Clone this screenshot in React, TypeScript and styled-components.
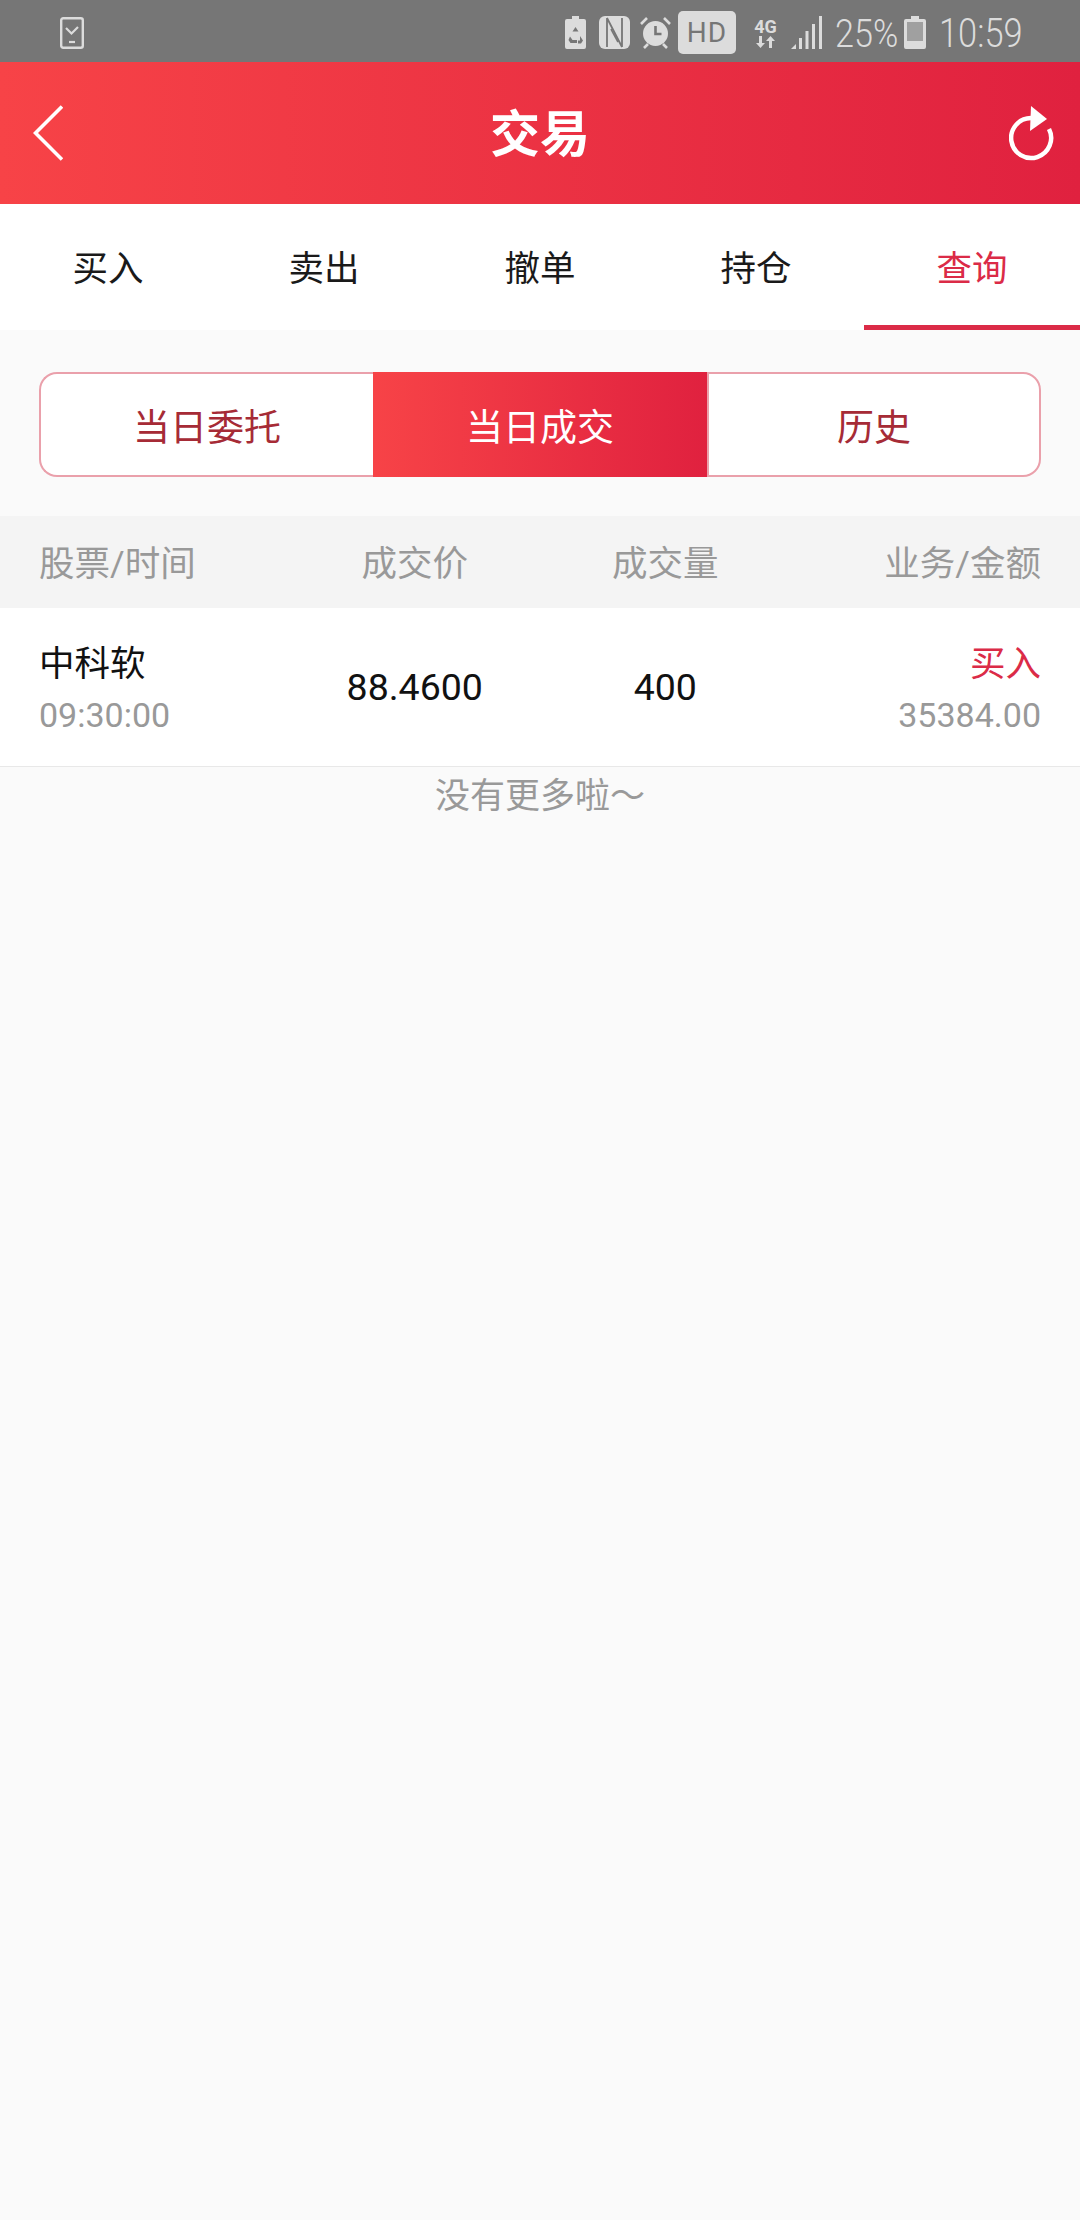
import { createGlobalStyle, styled } from 'styled-components';

const CJK = `Roboto, "Noto Sans CJK SC", sans-serif`;

const GlobalStyle = createGlobalStyle`
	html,
	body {
		margin: 0;
		padding: 0;
		background: #fafafa;
	}
	* {
		box-sizing: border-box;
	}
`;

const Page = styled.div`
	width: 1080px;
	min-height: 2220px;
	background: #fafafa;
	font-family: ${CJK};
	overflow: hidden;
`;

const StatusBar = styled.div`
	height: 62px;
	padding: 3px 0 0 60px;
	display: flex;
	align-items: center;
	background: #767676;
	color: #dcdcdc;
`;

const StatusRight = styled.div`
	margin-left: auto;
	display: flex;
	align-items: center;
	width: 515px;
`;

const StatusSlot = styled.div<{ $left: number }>`
	margin-left: ${(p) => p.$left}px;
	display: flex;
	align-items: center;
`;

const HdBadge = styled.div`
	width: 58px;
	height: 43px;
	border-radius: 5px;
	background: #dcdcdc;
	color: #767676;
	font-size: 28px;
	line-height: 43px;
	text-align: center;
	letter-spacing: 1px;
`;

const NetBlock = styled.div`
	width: 25px;
	display: flex;
	flex-direction: column;
	align-items: center;
`;

const NetLabel = styled.div`
	font-size: 18px;
	line-height: 19px;
	font-weight: 700;
	white-space: nowrap;
`;

const StatusText = styled.div<{ $w: number; $size: number; $scale: number }>`
	width: ${(p) => p.$w}px;
	padding-top: 3px;
	font-size: ${(p) => p.$size}px;
	line-height: 44px;
	font-weight: 300;
	white-space: nowrap;
	transform: scaleX(${(p) => p.$scale});
	transform-origin: left center;
`;

const Header = styled.div`
	height: 142px;
	padding: 0 25px;
	display: grid;
	grid-template-columns: 1fr auto 1fr;
	align-items: center;
	background: linear-gradient(90deg, #f74347, #e0213f);
`;

const Title = styled.div`
	padding-top: 3px;
	color: #fff;
	font-size: 50px;
	font-weight: 700;
	line-height: 60px;
`;

const IconBtn = styled.div<{ $right?: boolean }>`
	display: flex;
	align-items: center;
	padding-left: ${(p) => (p.$right ? '0' : '8px')};
	justify-content: ${(p) => (p.$right ? 'flex-end' : 'flex-start')};
`;

const Tabs = styled.div`
	height: 126px;
	display: grid;
	grid-template-columns: repeat(5, 216px);
	background: #fff;
`;

const Tab = styled.div<{ $active?: boolean }>`
	display: flex;
	align-items: center;
	justify-content: center;
	padding-top: 2px;
	font-size: 35.5px;
	color: ${(p) => (p.$active ? '#db2b47' : '#1a1a1a')};
	border-bottom: 5px solid ${(p) => (p.$active ? '#db2b47' : 'transparent')};
`;

const Segments = styled.div`
	margin: 42px 39px 39px;
	height: 105px;
	display: grid;
	grid-template-columns: repeat(3, 1fr);
`;

const Segment = styled.div<{ $active?: boolean }>`
	display: flex;
	align-items: center;
	justify-content: center;
	font-size: 37px;
	color: #a62b36;
	background: #fff;
	border: 2px solid #eaa0ab;

	&:first-child {
		border-right: none;
		border-radius: 18px 0 0 18px;
	}

	&:last-child {
		border-radius: 0 18px 18px 0;
	}
`;

const ActiveSegment = styled(Segment)`
	color: #fff;
	border: none;
	background: linear-gradient(90deg, #f74347, #e0213f);
`;

const Cols = styled.div`
	padding: 0 39px;
	display: grid;
	grid-template-columns: repeat(4, 1fr);
	align-items: center;
`;

const TableHead = styled(Cols)`
	height: 92px;
	padding-bottom: 3px;
	background: #f4f4f4;
	color: #999;
	font-size: 35.5px;
`;

const Row = styled(Cols)`
	height: 159px;
	padding-top: 5px;
	background: #fff;
	border-bottom: 1px solid #e8e8e8;
	color: #111;
`;

const Cell = styled.div<{ $align: 'left' | 'center' | 'right' }>`
	text-align: ${(p) => p.$align};
`;

const Mid = styled(Cell)`
	margin-bottom: 5px;
	font-size: 37.5px;
`;

const Primary = styled.div<{ $red?: boolean }>`
	font-size: 35.5px;
	line-height: 44px;
	color: ${(p) => (p.$red ? '#db2b47' : '#111')};
`;

const Secondary = styled.div`
	margin-top: 7px;
	font-size: 34px;
	line-height: 44px;
	color: #999;
`;

const NoMore = styled.div`
	margin-top: 8px;
	text-align: center;
	font-size: 35px;
	line-height: 44px;
	color: #999;
`;

const DocIcon = () => (
	<svg width="24" height="32" viewBox="0 0 24 32" fill="none" stroke="#dcdcdc">
		<rect x="1.2" y="1.2" width="21.6" height="29.6" rx="2" strokeWidth="2.4" />
		<path d="M6 11l5.500 5.500L18 10" strokeWidth="2.2" />
		<path d="M9 25h6" strokeWidth="2.2" />
	</svg>
);

const RecycleBatteryIcon = () => (
	<svg width="21" height="33" viewBox="0 0 21 33">
		<path d="M7 0h7v3h5a2 2 0 0 1 2 2v26a2 2 0 0 1-2 2H2a2 2 0 0 1-2-2V5a2 2 0 0 1 2-2h5z" fill="#dcdcdc" />
		<path d="M10.500 11l3 4.500h-6zM5 20.500l2.500 3.500H12v3H5.500L3.500 24zM15 20l3 4.500-2 3h-3v-3h2z" fill="#767676" />
	</svg>
);

const NfcIcon = () => (
	<svg width="31" height="33" viewBox="0 0 31 33">
		<rect width="31" height="33" rx="6" fill="#dcdcdc" />
		<path d="M8 2v29M8 2l15 29M23 2v29" fill="none" stroke="#767676" strokeWidth="1.800" />
		<path d="M12 13l7 13" fill="none" stroke="#767676" strokeWidth="1.600" />
	</svg>
);

const AlarmIcon = () => (
	<svg width="31" height="33" viewBox="0 0 31 33">
		<circle cx="15.500" cy="17.500" r="12.500" fill="#dcdcdc" />
		<path d="M15.500 10v8h6" fill="none" stroke="#767676" strokeWidth="2.600" />
		<path d="M1 8l6-6M30 8l-6-6M4 32l4-4M27 32l-4-4" stroke="#dcdcdc" strokeWidth="2.600" />
	</svg>
);

const NetArrows = () => (
	<svg width="19" height="12" viewBox="0 0 19 12" fill="#dcdcdc">
		<path d="M3 0h3v7h3l-4.500 5L0 7h3zM13 12h3V5h3l-4.500-5L10 5h3z" />
	</svg>
);

const SignalIcon = () => (
	<svg width="32" height="33" viewBox="0 0 32 33" fill="#dcdcdc">
		<path d="M0 33l5-5v5z" />
		<rect x="8" y="22" width="3" height="11" />
		<rect x="14.500" y="15" width="3" height="18" />
		<rect x="21" y="8" width="3" height="25" />
		<rect x="28" y="0" width="3" height="33" />
	</svg>
);

const BatteryIcon = () => (
	<svg width="22" height="33" viewBox="0 0 22 33">
		<path d="M7 0h8v3h5a2 2 0 0 1 2 2v26a2 2 0 0 1-2 2H2a2 2 0 0 1-2-2V5a2 2 0 0 1 2-2h5z" fill="#dcdcdc" />
		<rect x="3" y="6" width="16" height="19" fill="#a0a0a0" />
	</svg>
);

const BackIcon = () => (
	<svg width="30" height="56" viewBox="0 0 30 56" fill="none" stroke="#fff" strokeWidth="3.600">
		<path d="M29 1.500L2.500 28 29 54.500" />
	</svg>
);

const RefreshIcon = () => (
	<svg width="46" height="56" viewBox="0 0 46 56" fill="none">
		<path d="M22 13A20 20 0 1 0 40 24" stroke="#fff" strokeWidth="4.500" />
		<path d="M22 1l16 13-17 12z" fill="#fff" />
	</svg>
);

const tabs = ['买入', '卖出', '撤单', '持仓', '查询'];

export default function App() {
	return (
		<Page>
			<GlobalStyle />
			<StatusBar>
				<DocIcon />
				<StatusRight>
					<StatusSlot $left={0}>
						<RecycleBatteryIcon />
					</StatusSlot>
					<StatusSlot $left={13}>
						<NfcIcon />
					</StatusSlot>
					<StatusSlot $left={10}>
						<AlarmIcon />
					</StatusSlot>
					<StatusSlot $left={7}>
						<HdBadge>HD</HdBadge>
					</StatusSlot>
					<StatusSlot $left={17}>
						<NetBlock>
							<NetLabel>4G</NetLabel>
							<NetArrows />
						</NetBlock>
					</StatusSlot>
					<StatusSlot $left={13}>
						<SignalIcon />
					</StatusSlot>
					<StatusSlot $left={12}>
						<StatusText $w={61} $size={38} $scale={0.9}>
							25%
						</StatusText>
					</StatusSlot>
					<StatusSlot $left={8}>
						<BatteryIcon />
					</StatusSlot>
					<StatusSlot $left={13}>
						<StatusText $w={81} $size={40} $scale={0.86}>
							10:59
						</StatusText>
					</StatusSlot>
				</StatusRight>
			</StatusBar>
			<Header>
				<IconBtn>
					<BackIcon />
				</IconBtn>
				<Title>交易</Title>
				<IconBtn $right>
					<RefreshIcon />
				</IconBtn>
			</Header>
			<Tabs>
				{tabs.map((t) => (
					<Tab key={t} $active={t === '查询'}>
						{t}
					</Tab>
				))}
			</Tabs>
			<Segments>
				<Segment>当日委托</Segment>
				<ActiveSegment>当日成交</ActiveSegment>
				<Segment>历史</Segment>
			</Segments>
			<TableHead>
				<Cell $align="left">股票/时间</Cell>
				<Cell $align="center">成交价</Cell>
				<Cell $align="center">成交量</Cell>
				<Cell $align="right">业务/金额</Cell>
			</TableHead>
			<Row>
				<Cell $align="left">
					<Primary>中科软</Primary>
					<Secondary>09:30:00</Secondary>
				</Cell>
				<Mid $align="center">88.4600</Mid>
				<Mid $align="center">400</Mid>
				<Cell $align="right">
					<Primary $red>买入</Primary>
					<Secondary>35384.00</Secondary>
				</Cell>
			</Row>
			<NoMore>没有更多啦～</NoMore>
		</Page>
	);
}
